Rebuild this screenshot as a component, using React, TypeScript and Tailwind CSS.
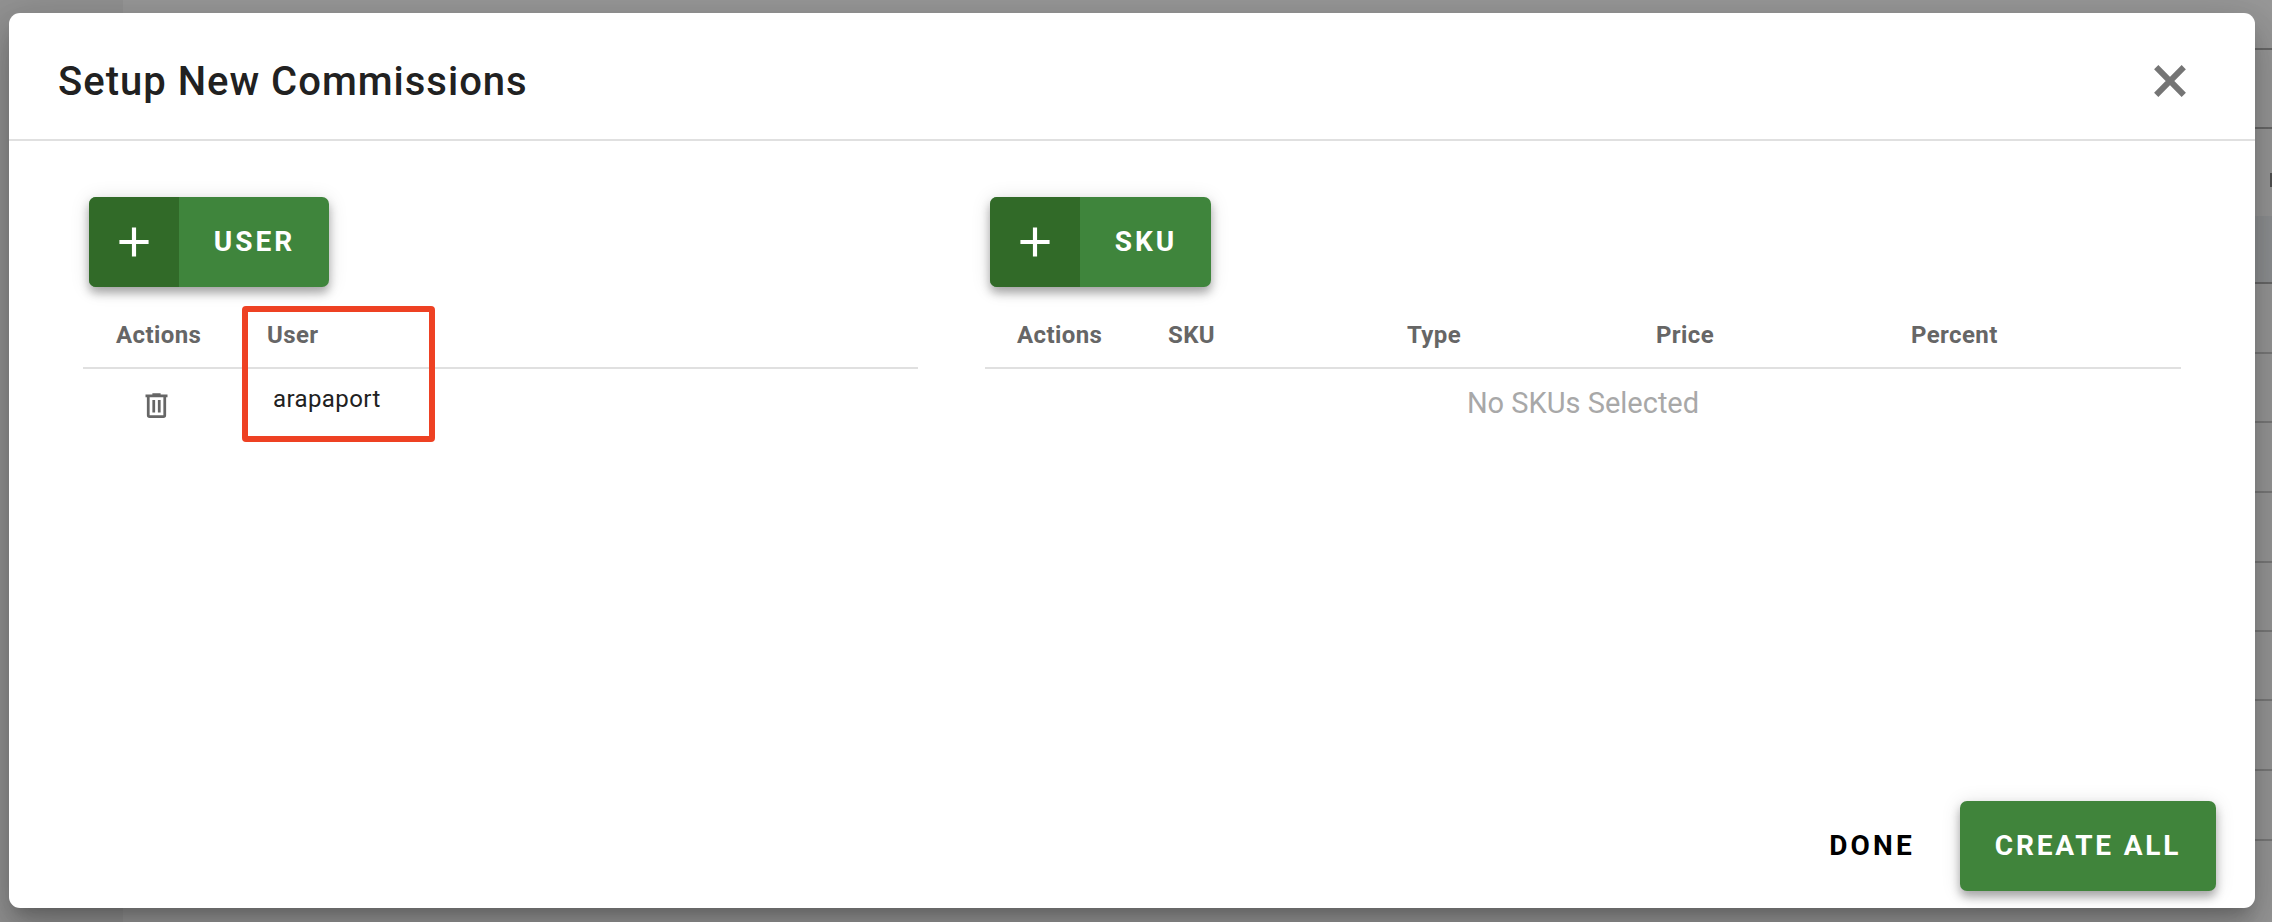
import React from "react";

const font = { fontFamily: "Roboto, 'Liberation Sans', sans-serif" };

function Plus() {
  return (
    <svg viewBox="0 0 24 24" className="w-[50px] h-[50px] fill-white">
      <path d="M19 13h-6v6h-2v-6H5v-2h6V5h2v6h6v2z" />
    </svg>
  );
}

function AddButton({ label, w }: { label: string; w: string }) {
  return (
    <div className={`${w} flex h-[90px] rounded-[7px] overflow-hidden bg-[#3f853c] shadow-[0_6px_10px_rgba(0,0,0,0.3),0_2px_20px_rgba(0,0,0,0.12)]`}>
      <div className="w-[90px] shrink-0 bg-[#316a28] flex items-center justify-center">
        <Plus />
      </div>
      <div className="flex-1 flex items-center justify-center text-white font-bold text-[28px] tracking-[3px] pl-[1px]">{label}</div>
    </div>
  );
}

const bgRows = [
  "h-[50px] border-[#b0b0b0]",
  "h-[79px] border-[#b0b0b0]",
  "h-[87px] border-transparent",
  "h-[68px] bg-[#eef2f6] border-[#b0b0b0]",
  "h-[70px] border-[#cccccc]",
  "h-[69px] border-[#cccccc]",
  "h-[70px] border-[#cccccc]",
  "h-[70px] border-[#cccccc]",
  "h-[69px] border-[#cccccc]",
  "h-[69px] border-[#cccccc]",
  "h-[70px] border-[#cccccc]",
  "h-[70px] border-[#cccccc]",
];

export default function App() {
  return (
    <div style={font} className="relative w-[2272px] h-[922px] overflow-hidden bg-[#fdfdfd]">
      <div className="flex h-full">
        <div className="w-[123px] shrink-0 bg-[#f4f4f4]" />
        <div className="flex-1 flex flex-col">
          {bgRows.map((h, i) => (
            <div key={i} className={`${h} shrink-0 border-b-2`} />
          ))}
        </div>
      </div>
      <div className="absolute right-0 top-[173px] w-[2px] h-[14px] bg-[#888888]" />
      <div className="absolute inset-0 bg-black/40" />
      <div className="absolute left-[9px] top-[13px] w-[2246px] h-[895px] bg-white rounded-[11px] flex flex-col shadow-[0_11px_15px_-7px_rgba(0,0,0,0.2),0_24px_38px_3px_rgba(0,0,0,0.14),0_9px_46px_8px_rgba(0,0,0,0.12)]">
        <div className="h-[128px] shrink-0 border-b-2 border-[#e0e0e0] flex items-center justify-between pl-[49px] pr-[71px] pt-[12px]">
          <div className="text-[40px] font-medium text-[#212121] tracking-[1px]">Setup New Commissions</div>
          <svg viewBox="0 0 24 24" className="w-[50px] h-[50px] fill-[#757575] stroke-[#757575] stroke-[0.9] mr-[-11px] mt-[-2px]">
            <path d="M19 6.41 17.59 5 12 10.59 6.41 5 5 6.41 10.59 12 5 17.59 6.41 19 12 13.41 17.59 19 19 17.59 13.41 12z" />
          </svg>
        </div>
        <div className="flex-1 flex pl-[74px] pt-[56px]">
          <div className="w-[835px] shrink-0">
            <div className="pl-[6px]">
              <AddButton label="USER" w="w-[240px]" />
            </div>
            <div className="mt-[16px] h-[66px] border-b-2 border-[#e0e0e0] grid grid-cols-[151px_1fr] px-[33px] items-center text-[24px] tracking-[0.4px] font-bold text-[#666666]">
              <div>Actions</div>
              <div>User</div>
            </div>
            <div className="grid grid-cols-[151px_1fr] px-[33px] items-center h-[64px] text-[24px] tracking-[0.4px] text-[#212121]">
              <div className="pl-[24px] pt-[8px]">
                <svg viewBox="0 0 24 24" className="w-[33px] h-[33px] fill-[#666666]">
                  <path d="M9,3V4H4V6H5V19A2,2 0 0,0 7,21H17A2,2 0 0,0 19,19V6H20V4H15V3H9M7,6H17V19H7V6M9,8V17H11V8H9M13,8V17H15V8H13Z" />
                </svg>
              </div>
              <div className="pl-[6px] pb-[4px]">arapaport</div>
            </div>
          </div>
          <div className="w-[1196px] shrink-0 ml-[67px]">
            <div className="pl-[5px]">
              <AddButton label="SKU" w="w-[221px]" />
            </div>
            <div className="mt-[16px] h-[66px] border-b-2 border-[#e0e0e0] grid grid-cols-[151px_239px_249px_255px_1fr] px-[32px] items-center text-[24px] tracking-[0.4px] font-bold text-[#666666]">
              <div>Actions</div>
              <div>SKU</div>
              <div>Type</div>
              <div>Price</div>
              <div>Percent</div>
            </div>
            <div className="h-[70px] flex items-center justify-center text-[29px] text-[#a8a8a8]">No SKUs Selected</div>
          </div>
        </div>
        <div className="shrink-0 flex justify-end items-center pr-[39px] pb-[17px] gap-[45px]">
          <div className="text-[28px] font-bold tracking-[3.2px] text-black">DONE</div>
          <div className="w-[256px] h-[90px] rounded-[7px] bg-[#40843b] flex items-center justify-center text-white font-bold text-[28px] tracking-[2.8px] shadow-[0_6px_10px_rgba(0,0,0,0.3),0_2px_20px_rgba(0,0,0,0.12)]">CREATE ALL</div>
        </div>
      </div>
      <div className="absolute left-[242px] top-[306px] w-[193px] h-[136px] border-[6px] border-[#ee4123] rounded-[4px]" />
    </div>
  );
}
